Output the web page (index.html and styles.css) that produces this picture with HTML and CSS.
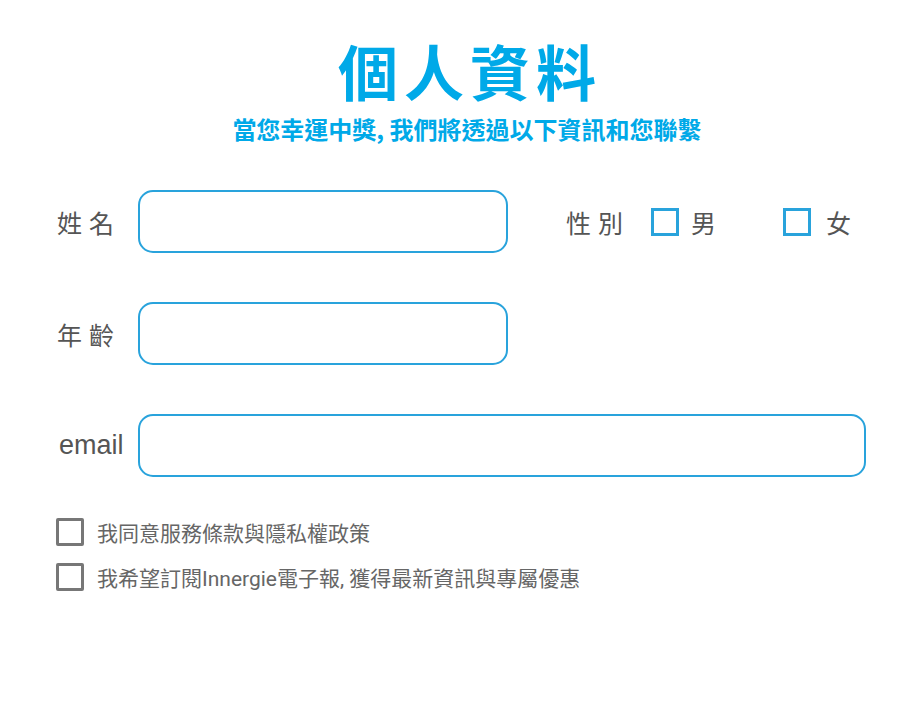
FILE: index.html
```html
<!DOCTYPE html>
<html lang="zh-Hant">

<head>
    <meta charset="utf-8">
    <meta name="viewport" content="width=device-width, initial-scale=1.0">
    <title>個人資料</title>
    <link rel="stylesheet" href="styles.css">
</head>

<body>

    <header>
        <h1>個人資料</h1>
        <p class="intro">當您幸運中獎, 我們將透過以下資訊和您聯繫</p>
    </header>

    <form>
        <div class="row">
            <label class="label" for="name">姓名</label>
            <input class="field" type="text" id="name">

            <div class="gender">
                <span class="label">性別</span>
                <label class="option"><input class="box" type="checkbox">男</label>
                <label class="option"><input class="box" type="checkbox">女</label>
            </div>
        </div>

        <div class="row">
            <label class="label" for="age">年齡</label>
            <input class="field" type="text" id="age">
        </div>

        <div class="row">
            <label class="label email" for="email">email</label>
            <input class="field wide" type="email" id="email">
        </div>

        <div class="agree">
            <label class="check"><input class="box grey" type="checkbox">我同意服務條款與隱私權政策</label>
            <label class="check"><input class="box grey" type="checkbox">我希望訂閱Innergie電子報, 獲得最新資訊與專屬優惠</label>
        </div>
    </form>

</body></html>
```

FILE: styles.css
```css
body {
    margin: 0;
    font-family: "Noto Sans CJK TC", "Noto Sans", sans-serif;
    background-color: #fff;
}

header {
    text-align: center;
    padding: 35px 0 0 20px;
}

h1 {
    margin: 0;
    font-size: 60px;
    line-height: 70px;
    letter-spacing: 6px;
    font-weight: 700;
    color: #00a9e8;
}

.intro {
    margin: 9px 0 0;
    font-size: 24px;
    line-height: 30px;
    font-weight: 700;
    color: #00a9e8;
    margin-left: -6px;
}

form {
    padding: 46px 54px 0 57px;
}

.row {
    display: flex;
    align-items: center;
    margin-bottom: 49px;
}

.label {
    width: 81px;
    font-size: 25px;
    letter-spacing: 7px;
    color: #555;
}

.email {
    font-family: "Liberation Sans", Arial, sans-serif;
    font-size: 27px;
    letter-spacing: 0;
    padding-left: 2px;
    width: 79px;
}

.field {
    box-sizing: border-box;
    width: 370px;
    height: 63px;
    margin: 0;
    border: 2px solid #29a3dc;
    border-radius: 15px;
    outline: none;
    background: #fff;
}

.wide {
    width: 728px;
}

.gender {
    display: flex;
    align-items: center;
    margin: 1px 0 0 58px;
}

.gender .label {
    width: auto;
    margin-right: 21px;
}

.option {
    display: flex;
    align-items: center;
    font-size: 25px;
    color: #555;
    margin-right: 67px;
}

.option:last-child {
    margin-right: 0;
}

.box {
    appearance: none;
    box-sizing: border-box;
    width: 28px;
    height: 28px;
    margin: 0 12px 0 0;
    border: 3px solid #29a3dc;
    background: #fff;
}

.option:last-child .box {
    margin-right: 15px;
}

.agree {
    margin-top: -9px;
}

.check {
    display: flex;
    align-items: center;
    font-family: Roboto, "Noto Sans CJK TC", sans-serif;
    font-size: 21px;
    color: #666;
    margin-bottom: 15px;
}

.box.grey {
    width: 28px;
    height: 28px;
    border: 3px solid #777;
    border-radius: 2px;
    margin: 0 13px 0 -1px;
}
```
